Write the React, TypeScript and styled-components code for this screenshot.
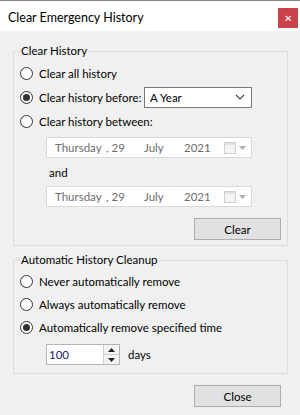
import styled, { createGlobalStyle } from "styled-components";

const GlobalStyle = createGlobalStyle`
  html, body {
    margin: 0;
    padding: 0;
    background: #f0f0f0;
  }
  * {
    box-sizing: border-box;
  }
`;

const Window = styled.div`
  width: 300px;
  height: 415px;
  display: flex;
  flex-direction: column;
  background: #f0f0f0;
  font-family: Lato, "Noto Sans", sans-serif;
  font-size: 11.5px;
  color: #000;
  white-space: nowrap;
  overflow: hidden;
`;

const TitleBar = styled.div`
  height: 31px;
  flex: none;
  display: flex;
  align-items: center;
  justify-content: space-between;
  background: #fff;
  border-top: 1px solid #8a8a8a;
  padding: 0 2px 0 8px;
`;

const Title = styled.span`
  font-size: 12.5px;
  padding-top: 2px;
`;

const CloseX = styled.div`
  width: 20px;
  height: 20px;
  margin-top: 4px;
  background: #c8434a;
  color: #fff;
  display: flex;
  align-items: center;
  justify-content: center;
  font-size: 10px;
  line-height: 1;
`;

const Body = styled.div`
  flex: 1;
  display: flex;
  flex-direction: column;
  padding: 0 12px 0 13px;
`;

const Group = styled.div<{ $top: number }>`
  position: relative;
  margin-top: ${({ $top }) => $top}px;
  border: 1px solid #dcdcdc;
  display: flex;
  flex-direction: column;
`;

const Legend = styled.span`
  position: absolute;
  top: -9px;
  left: 6px;
  padding: 0 1px;
  background: #f0f0f0;
  line-height: 16px;
`;

const Rows = styled.div<{ $pt: number; $pb: number }>`
  display: flex;
  flex-direction: column;
  padding: ${({ $pt, $pb }) => `${$pt}px 6px ${$pb}px 6px`};
`;

const Row = styled.div<{ $h: number }>`
  height: ${({ $h }) => $h}px;
  display: flex;
  align-items: center;
`;

const RadioLabel = styled.label<{ $w?: number }>`
  display: flex;
  align-items: center;
  gap: 6px;
  width: ${({ $w }) => ($w ? `${$w}px` : "auto")};
  flex: none;
`;

const RadioDot = styled.span<{ $on?: boolean }>`
  width: 13px;
  height: 13px;
  border-radius: 50%;
  border: 1px solid #333;
  background: #fff;
  display: flex;
  align-items: center;
  justify-content: center;
  &::after {
    content: "";
    width: 7px;
    height: 7px;
    border-radius: 50%;
    background: ${({ $on }) => ($on ? "#333" : "transparent")};
  }
`;

const Select = styled.div`
  width: 108px;
  height: 21px;
  border: 1px solid #7a7a7a;
  background: #fff;
  display: flex;
  align-items: center;
  justify-content: space-between;
  padding: 0 6px 0 5px;
`;

const Indented = styled.div<{ $mt: number }>`
  margin: ${({ $mt }) => $mt}px 0 0 26px;
  display: flex;
  flex-direction: column;
`;

const DateBox = styled.div`
  width: 206px;
  height: 21px;
  border: 1px solid #d9d9d9;
  background: #fff;
  color: #6d6d6d;
  display: grid;
  grid-template-columns: 51px 38px 40px 38px 1fr;
  align-items: center;
  padding-left: 8px;
`;

const DateIcon = styled.span`
  display: flex;
  align-items: center;
  gap: 3px;
  padding-left: 2px;
`;

const AndText = styled.div`
  height: 28px;
  display: flex;
  align-items: center;
  padding-left: 3px;
`;

const ButtonRow = styled.div<{ $mt: number; $mr: number }>`
  display: flex;
  justify-content: flex-end;
  margin: ${({ $mt, $mr }) => `${$mt}px ${$mr}px 0 0`};
`;

const Button = styled.div`
  width: 87px;
  height: 22px;
  border: 1px solid #adadad;
  background: #e1e1e1;
  display: flex;
  align-items: center;
  justify-content: center;
`;

const SpinRow = styled.div`
  display: flex;
  align-items: center;
  gap: 8px;
  margin: 5px 0 0 26px;
`;

const Spinner = styled.div`
  width: 74px;
  height: 21px;
  border: 1px solid #b5b5b5;
  background: #fff;
  display: flex;
`;

const SpinValue = styled.span`
  flex: 1;
  padding-left: 2px;
  display: flex;
  align-items: center;
  color: #24206a;
`;

const SpinButtons = styled.div`
  width: 16px;
  display: flex;
  flex-direction: column;
  border-left: 1px solid #d0d0d0;
`;

const SpinBtn = styled.div`
  flex: 1;
  display: flex;
  align-items: center;
  justify-content: center;
  background: #f3f3f3;
  & + & {
    border-top: 1px solid #d0d0d0;
  }
`;

function Chevron() {
  return (
    <svg width="10" height="6" viewBox="0 0 10 6">
      <path d="M1 1 L5 5 L9 1" fill="none" stroke="#444" strokeWidth="1.1" />
    </svg>
  );
}

function Calendar() {
  return (
    <>
      <svg width="12" height="12" viewBox="0 0 12 12">
        <rect x="0.5" y="0.5" width="11" height="11" fill="#f4f4f4" stroke="#cfcfcf" />
        <rect x="1" y="1" width="10" height="2" fill="#e2e2e2" />
      </svg>
      <svg width="7" height="4" viewBox="0 0 7 4">
        <path d="M0 0 L7 0 L3.5 4 Z" fill="#b0b0b0" />
      </svg>
    </>
  );
}

function Tri({ up }: { up?: boolean }) {
  return (
    <svg width="7" height="4" viewBox="0 0 7 4">
      <path d={up ? "M0 4 L7 4 L3.5 0 Z" : "M0 0 L7 0 L3.5 4 Z"} fill="#222" />
    </svg>
  );
}

function Radio({ on, text, width }: { on?: boolean; text: string; width?: number }) {
  return (
    <RadioLabel $w={width}>
      <RadioDot $on={on} />
      <span>{text}</span>
    </RadioLabel>
  );
}

function DatePicker() {
  return (
    <DateBox>
      <span>Thursday</span>
      <span>, 29</span>
      <span>July</span>
      <span>2021</span>
      <DateIcon>
        <Calendar />
      </DateIcon>
    </DateBox>
  );
}

export default function App() {
  return (
    <Window>
      <GlobalStyle />
      <TitleBar>
        <Title>Clear Emergency History</Title>
        <CloseX>✕</CloseX>
      </TitleBar>
      <Body>
        <Group $top={20}>
          <Legend>Clear History</Legend>
          <Rows $pt={9} $pb={5}>
            <Row $h={24}>
              <Radio text="Clear all history" />
            </Row>
            <Row $h={24}>
              <Radio on text="Clear history before:" width={124} />
              <Select>
                <span>A Year</span>
                <Chevron />
              </Select>
            </Row>
            <Row $h={24}>
              <Radio text="Clear history between:" />
            </Row>
            <Indented $mt={4}>
              <DatePicker />
              <AndText>and</AndText>
              <DatePicker />
            </Indented>
            <ButtonRow $mt={11} $mr={0}>
              <Button>Clear</Button>
            </ButtonRow>
          </Rows>
        </Group>
        <Group $top={14}>
          <Legend>Automatic History Cleanup</Legend>
          <Rows $pt={9} $pb={8}>
            <Row $h={23}>
              <Radio text="Never automatically remove" />
            </Row>
            <Row $h={23}>
              <Radio text="Always automatically remove" />
            </Row>
            <Row $h={23}>
              <Radio on text="Automatically remove specified time" />
            </Row>
            <SpinRow>
              <Spinner>
                <SpinValue>100</SpinValue>
                <SpinButtons>
                  <SpinBtn>
                    <Tri up />
                  </SpinBtn>
                  <SpinBtn>
                    <Tri />
                  </SpinBtn>
                </SpinButtons>
              </Spinner>
              <span>days</span>
            </SpinRow>
          </Rows>
        </Group>
        <ButtonRow $mt={11} $mr={7}>
          <Button>Close</Button>
        </ButtonRow>
      </Body>
    </Window>
  );
}
